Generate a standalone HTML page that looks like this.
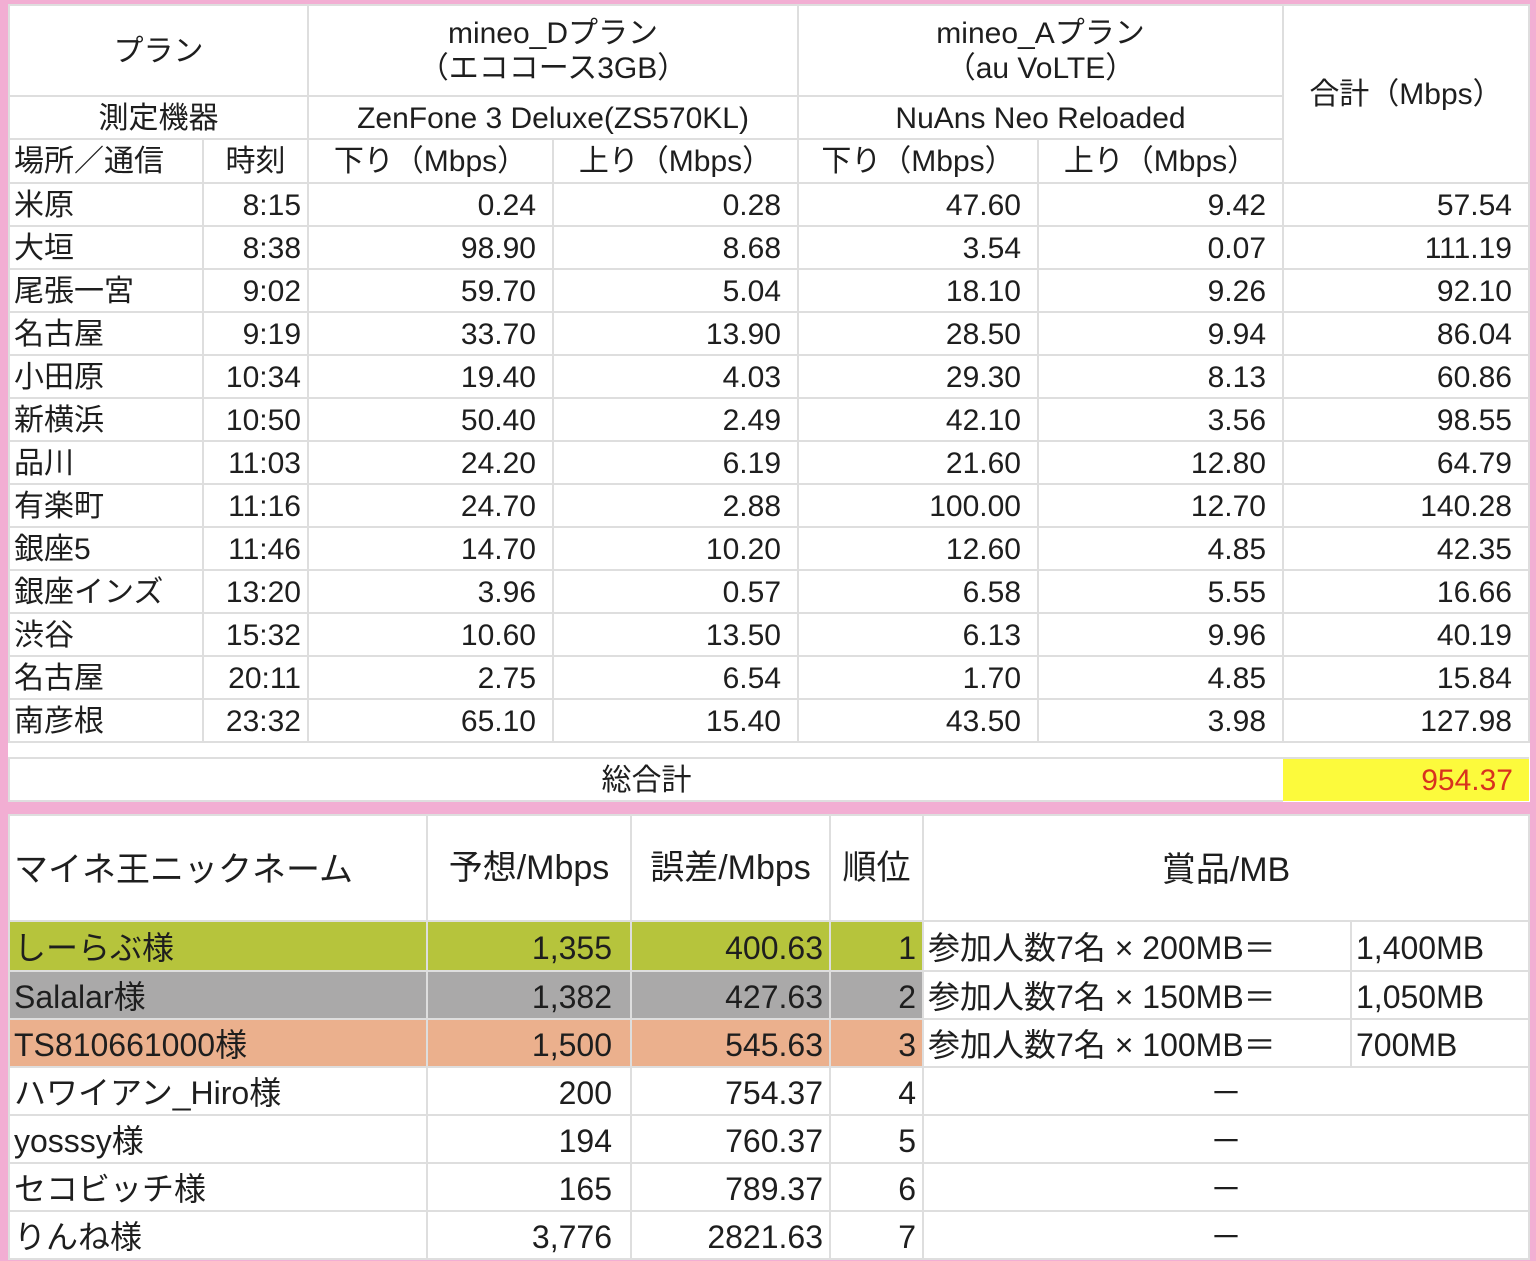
<!DOCTYPE html>
<html><head><meta charset="utf-8"><style>
body{margin:0;width:1536px;height:1261px;background:#f2aed3;position:relative;overflow:hidden;font-family:"Liberation Sans","Noto Sans CJK JP",sans-serif;color:#1e1e1e}
table{position:absolute;border-collapse:collapse;table-layout:fixed;background:#fff}
td{border:2px solid #dedede;padding:2px 4px 0 4px;font-size:30px;white-space:nowrap;overflow:hidden;line-height:1}
.r{text-align:right;padding-right:16px}.c{text-align:center}
#t1{left:8px;top:4px;width:1520px}
#t2{left:8px;top:814px;width:1520px}
#t2 td{font-size:32px;padding:4px 4px 0 4px}
#t2 td.r{padding-right:18px}
#t2 td.k{padding-right:6px}
#t2 tr.h td{font-size:34px}
</style></head><body>
<table id="t1">
<colgroup><col style="width:194px"><col style="width:105px"><col style="width:245px"><col style="width:245px"><col style="width:240px"><col style="width:245px"><col style="width:246px"></colgroup>
<tr style="height:91px"><td colspan="2" class="c">プラン</td><td colspan="2" class="c" style="line-height:1.15">mineo_Dプラン<br>（エココース3GB）</td><td colspan="2" class="c" style="line-height:1.15">mineo_Aプラン<br>（au VoLTE）</td><td rowspan="3" class="c">合計（Mbps）</td></tr>
<tr style="height:43px"><td colspan="2" class="c">測定機器</td><td colspan="2" class="c">ZenFone 3 Deluxe(ZS570KL)</td><td colspan="2" class="c">NuAns Neo Reloaded</td></tr>
<tr style="height:44px"><td>場所／通信</td><td class="c">時刻</td><td class="c">下り（Mbps）</td><td class="c">上り（Mbps）</td><td class="c">下り（Mbps）</td><td class="c">上り（Mbps）</td></tr>
<tr style="height:43px"><td>米原</td><td class="r" style="padding-right:6px">8:15</td><td class="r">0.24</td><td class="r">0.28</td><td class="r">47.60</td><td class="r">9.42</td><td class="r">57.54</td></tr>
<tr style="height:43px"><td>大垣</td><td class="r" style="padding-right:6px">8:38</td><td class="r">98.90</td><td class="r">8.68</td><td class="r">3.54</td><td class="r">0.07</td><td class="r">111.19</td></tr>
<tr style="height:43px"><td>尾張一宮</td><td class="r" style="padding-right:6px">9:02</td><td class="r">59.70</td><td class="r">5.04</td><td class="r">18.10</td><td class="r">9.26</td><td class="r">92.10</td></tr>
<tr style="height:43px"><td>名古屋</td><td class="r" style="padding-right:6px">9:19</td><td class="r">33.70</td><td class="r">13.90</td><td class="r">28.50</td><td class="r">9.94</td><td class="r">86.04</td></tr>
<tr style="height:43px"><td>小田原</td><td class="r" style="padding-right:6px">10:34</td><td class="r">19.40</td><td class="r">4.03</td><td class="r">29.30</td><td class="r">8.13</td><td class="r">60.86</td></tr>
<tr style="height:43px"><td>新横浜</td><td class="r" style="padding-right:6px">10:50</td><td class="r">50.40</td><td class="r">2.49</td><td class="r">42.10</td><td class="r">3.56</td><td class="r">98.55</td></tr>
<tr style="height:43px"><td>品川</td><td class="r" style="padding-right:6px">11:03</td><td class="r">24.20</td><td class="r">6.19</td><td class="r">21.60</td><td class="r">12.80</td><td class="r">64.79</td></tr>
<tr style="height:43px"><td>有楽町</td><td class="r" style="padding-right:6px">11:16</td><td class="r">24.70</td><td class="r">2.88</td><td class="r">100.00</td><td class="r">12.70</td><td class="r">140.28</td></tr>
<tr style="height:43px"><td>銀座5</td><td class="r" style="padding-right:6px">11:46</td><td class="r">14.70</td><td class="r">10.20</td><td class="r">12.60</td><td class="r">4.85</td><td class="r">42.35</td></tr>
<tr style="height:43px"><td>銀座インズ</td><td class="r" style="padding-right:6px">13:20</td><td class="r">3.96</td><td class="r">0.57</td><td class="r">6.58</td><td class="r">5.55</td><td class="r">16.66</td></tr>
<tr style="height:43px"><td>渋谷</td><td class="r" style="padding-right:6px">15:32</td><td class="r">10.60</td><td class="r">13.50</td><td class="r">6.13</td><td class="r">9.96</td><td class="r">40.19</td></tr>
<tr style="height:43px"><td>名古屋</td><td class="r" style="padding-right:6px">20:11</td><td class="r">2.75</td><td class="r">6.54</td><td class="r">1.70</td><td class="r">4.85</td><td class="r">15.84</td></tr>
<tr style="height:43px"><td>南彦根</td><td class="r" style="padding-right:6px">23:32</td><td class="r">65.10</td><td class="r">15.40</td><td class="r">43.50</td><td class="r">3.98</td><td class="r">127.98</td></tr>
<tr style="height:16px"><td colspan="7" style="border-left:none;border-right:none"></td></tr>
<tr style="height:43px"><td colspan="6" class="c" style="border-right:none">総合計</td><td class="r" style="background:#fcfa3c;color:#d8321e;border:none">954.37</td></tr>
</table>
<table id="t2">
<colgroup><col style="width:418px"><col style="width:204px"><col style="width:199px"><col style="width:93px"><col style="width:428px"><col style="width:178px"></colgroup>
<tr class="h" style="height:106px"><td>マイネ王ニックネーム</td><td class="c" style="padding:0">予想/Mbps</td><td class="c" style="padding:0">誤差/Mbps</td><td class="c" style="padding:0">順位</td><td colspan="2" class="c">賞品/MB</td></tr>
<tr style="height:50px"><td style="background:#b6c43c">しーらぶ様</td><td class="r" style="background:#b6c43c">1,355</td><td class="r" style="background:#b6c43c;padding-right:6px">400.63</td><td class="r k" style="background:#b6c43c">1</td><td>参加人数7名 × 200MB＝</td><td>1,400MB</td></tr>
<tr style="height:48px"><td style="background:#aaa9a9">Salalar様</td><td class="r" style="background:#aaa9a9">1,382</td><td class="r" style="background:#aaa9a9;padding-right:6px">427.63</td><td class="r k" style="background:#aaa9a9">2</td><td>参加人数7名 × 150MB＝</td><td>1,050MB</td></tr>
<tr style="height:48px"><td style="background:#ebb08d">TS810661000様</td><td class="r" style="background:#ebb08d">1,500</td><td class="r" style="background:#ebb08d;padding-right:6px">545.63</td><td class="r k" style="background:#ebb08d">3</td><td>参加人数7名 × 100MB＝</td><td>700MB</td></tr>
<tr style="height:48px"><td>ハワイアン_Hiro様</td><td class="r">200</td><td class="r" style="padding-right:6px">754.37</td><td class="r k">4</td><td colspan="2" class="c">－</td></tr>
<tr style="height:48px"><td>yosssy様</td><td class="r">194</td><td class="r" style="padding-right:6px">760.37</td><td class="r k">5</td><td colspan="2" class="c">－</td></tr>
<tr style="height:48px"><td>セコビッチ様</td><td class="r">165</td><td class="r" style="padding-right:6px">789.37</td><td class="r k">6</td><td colspan="2" class="c">－</td></tr>
<tr style="height:48px"><td>りんね様</td><td class="r">3,776</td><td class="r" style="padding-right:6px">2821.63</td><td class="r k">7</td><td colspan="2" class="c">－</td></tr>
</table>
</body></html>
